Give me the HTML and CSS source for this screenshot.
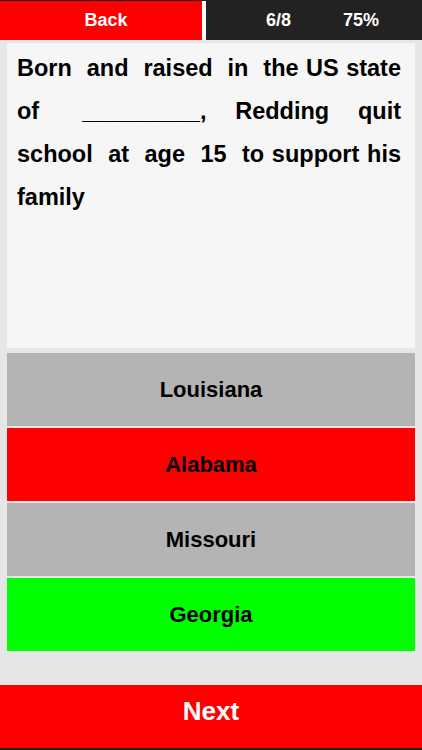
FILE: index.html
```html
<!DOCTYPE html>
<html lang="en">
<head>
  <meta charset="UTF-8">
  <meta name="viewport" content="width=device-width, initial-scale=1.0">
  <title>Quiz</title>
  <link rel="stylesheet" href="styles.css">
</head>
<body>

<div id="screen">
  <div class="topbar">
    <div class="back">Back</div>
    <div class="divider"></div>
    <div class="stats">
      <span>6/8</span>
      <span>75%</span>
    </div>
  </div>

  <div class="question">
    <p>Born  and  raised  in  the US state of   _________,  Redding  quit school  at  age  15  to support his family</p>
  </div>

  <div class="answers">
    <div class="answer">Louisiana</div>
    <div class="answer wrong">Alabama</div>
    <div class="answer">Missouri</div>
    <div class="answer right">Georgia</div>
  </div>

  <div class="next">Next</div>
</div>

</body>
</html>
```

FILE: styles.css
```css
body {
  font-family: "Liberation Sans", Arial, sans-serif;
  font-weight: bold;
  margin: 0;
  padding: 0;
  background-color: #e6e6e6;
}
#screen {
  display: flex;
  flex-direction: column;
  width: 422px;
  height: 750px;
}
.topbar {
  display: flex;
  height: 40px;
  box-sizing: border-box;
  border-top: 1px solid #222;
  color: #fff;
  font-size: 18px;
  line-height: 39px;
}
.back {
  width: 202px;
  padding-left: 10px;
  box-sizing: border-box;
  text-align: center;
  background-color: #ff0000;
}
.divider {
  width: 4px;
  background-color: #fff;
}
.stats {
  flex: 1;
  display: flex;
  gap: 52px;
  padding-left: 60px;
  background-color: #222;
}
.question {
  height: 305px;
  margin: 3px 7px 0;
  padding: 4px 14px 0 10px;
  box-sizing: border-box;
  background-color: #f6f6f6;
}
.question p {
  margin: 0;
  font-size: 23.5px;
  line-height: 43px;
  text-align: justify;
  white-space: pre-wrap;
  color: #000;
}
.answers {
  display: grid;
  gap: 2px;
  margin: 5px 7px 0;
}
.answer {
  height: 73px;
  line-height: 73px;
  text-align: center;
  font-size: 22px;
  color: #000;
  background-color: #b4b4b4;
}
.answer.wrong {
  background-color: #ff0000;
}
.answer.right {
  background-color: #00ff00;
}
.next {
  margin-top: auto;
  height: 65px;
  padding-top: 11px;
  box-sizing: border-box;
  border-bottom: 2px solid #222;
  text-align: center;
  font-size: 26px;
  line-height: 30px;
  color: #fff;
  background-color: #ff0000;
}
```
